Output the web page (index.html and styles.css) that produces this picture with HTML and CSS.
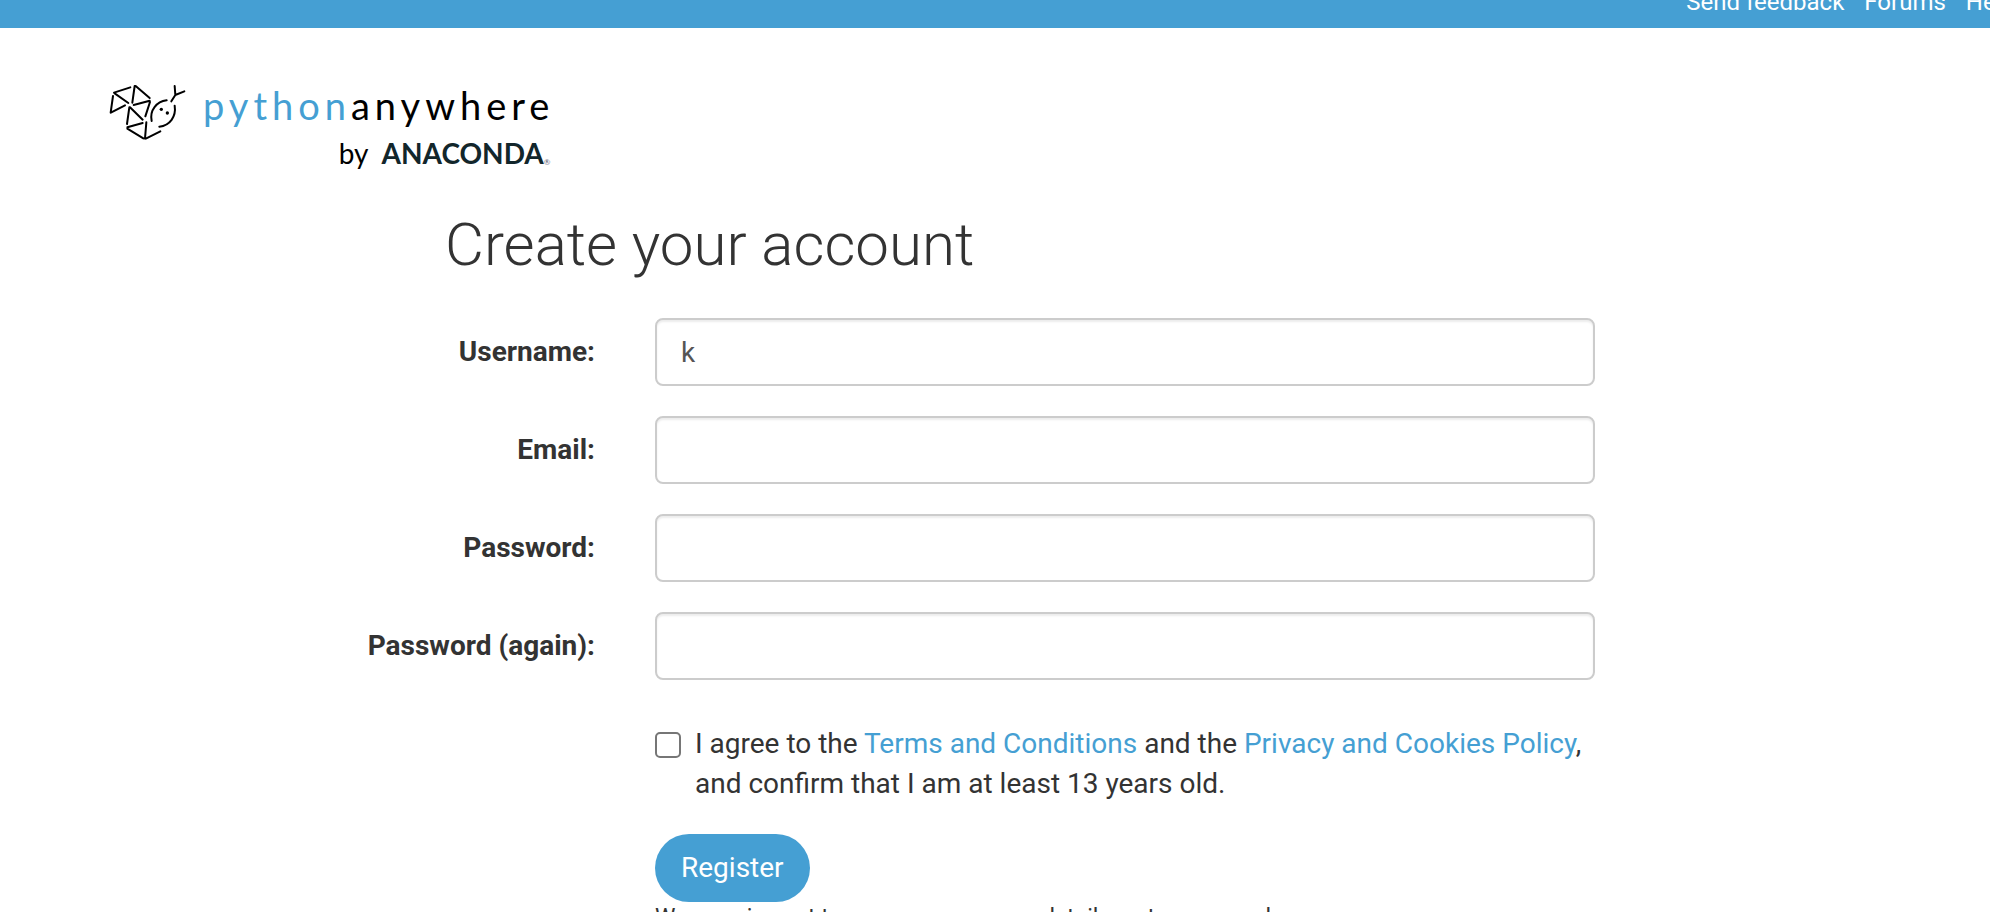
FILE: index.html
```html
<!DOCTYPE html>
<html lang="en">
<head>
<meta charset="utf-8">
<title>Create your account: PythonAnywhere</title>
<link rel="stylesheet" href="styles.css">
</head>
<body>
<nav class="topbar">
  <a href="#feedback">Send feedback</a>
  <a href="#forums">Forums</a>
  <a href="#help">Help</a>
</nav>
<header class="masthead">
  <a class="logo" href="#home">
    <svg class="logo-mark" viewBox="57 42 234 171" aria-hidden="true">
      <g fill="none" stroke="#000" stroke-width="6" stroke-linecap="round">
        <path d="M72 68L121 52M69 78L62 128M74 70L115 99M64 127L105 106"/>
        <path d="M134 48L127 98M137 48L179 84M131 105L179 92M180 96L166 139"/>
        <path d="M118 112L111 162M120 112L158 149M112 172L158 159M112 176L160 205M169 157L165 206M169 205L211 184"/>
        <path d="M185 153C178 120 200 95 230 91M254 107C259 140 240 166 208 170"/>
        <path d="M254 48L256 75L283 64M256 75L244 94"/>
      </g>
      <circle cx="214" cy="118" r="5"/>
      <circle cx="232" cy="129" r="5"/>
    </svg>
    <span class="logo-words">
      <span class="logo-name"><span class="logo-python">python</span>anywhere</span>
      <span class="logo-owner"><span class="logo-by">by</span><span class="logo-anaconda">ANACONDA</span><span class="logo-reg">®</span></span>
    </span>
  </a>
</header>
<main class="page">
  <h1 class="title">Create your account</h1>
  <form class="signup">
    <label class="field-label" for="username">Username:</label>
    <input class="field" id="username" type="text" value="k">
    <label class="field-label" for="email">Email:</label>
    <input class="field" id="email" type="email">
    <label class="field-label" for="password1">Password:</label>
    <input class="field" id="password1" type="password">
    <label class="field-label" for="password2">Password (again):</label>
    <input class="field" id="password2" type="password">
    <div class="actions">
      <div class="agree">
        <input class="tick" id="tos" type="checkbox">
        <label for="tos">I agree to the <a href="#terms">Terms and Conditions</a> and the <a href="#privacy">Privacy and Cookies Policy</a>, and confirm that I am at least 13 years old.</label>
      </div>
      <button class="register" type="submit">Register</button>
      <p class="note">We promise not to spam or pass your details on to anyone else.</p>
    </div>
  </form>
</main>
</body>
</html>
```
FILE: styles.css
```css
* {
  box-sizing: border-box;
}

body {
  margin: 0;
  height: 100vh;
  overflow: hidden;
  background: #fff;
  color: #333;
  font: 28px/40px Roboto, "Liberation Sans", sans-serif;
}

a {
  color: #459fd3;
  text-decoration: none;
}

.topbar {
  display: flex;
  align-items: flex-end;
  justify-content: flex-end;
  gap: 20px;
  height: 28px;
  padding-bottom: 6px;
  margin-right: -25px;
  background: #459fd3;
  font-size: 24px;
}

.topbar a {
  color: #fff;
}

.masthead {
  padding: 56px 109px 0;
}

.logo {
  display: inline-flex;
  align-items: flex-start;
  gap: 16px;
  color: #000;
  font-family: Lato, "Open Sans", sans-serif;
}

.logo-mark {
  width: 78px;
  height: 57px;
}

.logo-words {
  display: flex;
  flex-direction: column;
  align-items: flex-end;
}

.logo-name {
  font-size: 38px;
  line-height: 42px;
  letter-spacing: 5px;
}

.logo-python {
  color: #459fd3;
}

.logo-owner {
  display: flex;
  padding-right: 4px;
  font-size: 28px;
  line-height: 54px;
}

.logo-by {
  margin-right: 13px;
}

.logo-anaconda {
  color: #12262b;
  font-weight: 700;
}

.logo-reg {
  align-self: flex-end;
  color: #667;
  font-size: 8px;
  line-height: 36px;
}

.title {
  margin: 32px 0 40px 445px;
  font-size: 60px;
  font-weight: 300;
  line-height: 66px;
}

.signup {
  display: grid;
  grid-template-columns: 595fr 940fr;
  gap: 30px 60px;
  padding-right: 395px;
}

.field-label {
  align-self: center;
  font-weight: 700;
  text-align: right;
}

.field {
  width: 100%;
  height: 68px;
  padding: 12px 24px;
  border: 2px solid #ccc;
  border-radius: 8px;
  background: #fff;
  box-shadow: inset 0 2px 2px rgba(0, 0, 0, 0.075);
  color: #555;
  font: inherit;
}

.actions {
  grid-column: 2;
  padding-top: 14px;
}

.agree {
  display: flex;
  gap: 14px;
  align-items: flex-start;
}

.tick {
  flex: none;
  appearance: none;
  width: 26px;
  height: 26px;
  margin: 8px 0 0;
  border: 2px solid #767676;
  border-radius: 5px;
  background: #fff;
}

.register {
  display: block;
  height: 68px;
  margin-top: 30px;
  padding: 0 26px;
  border: 0;
  border-radius: 34px;
  background: #459fd3;
  color: #fff;
  font: inherit;
}

.note {
  margin: 0;
  font-size: 23px;
  line-height: 32px;
}
```
